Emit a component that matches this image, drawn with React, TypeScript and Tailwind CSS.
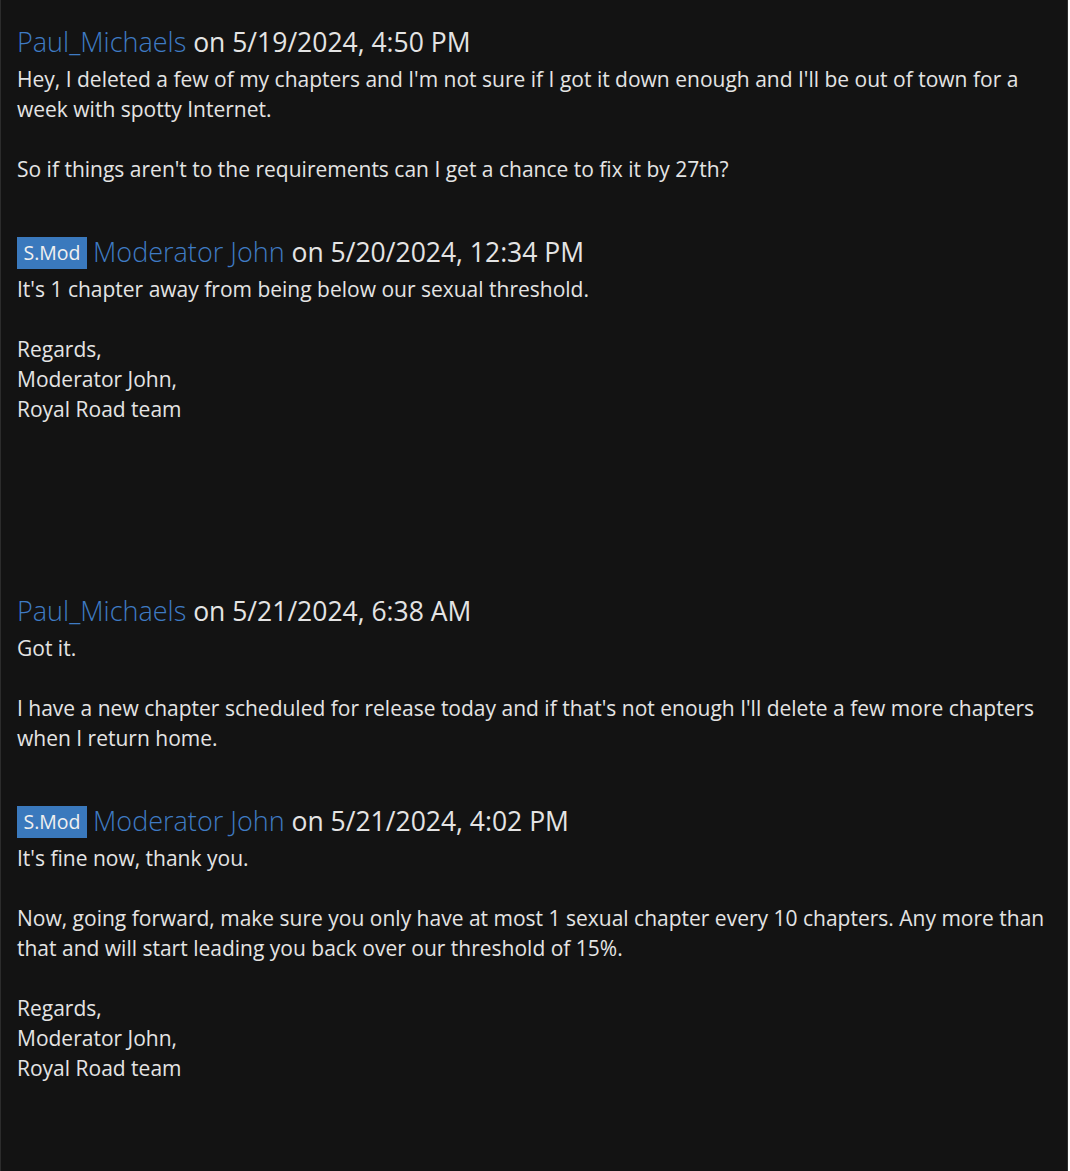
import React from "react";

type Msg = {
  name: string;
  mod?: boolean;
  date: string;
  lines: string[];
};

const msgs: Msg[] = [
  {
    name: "Paul_Michaels",
    date: "on 5/19/2024, 4:50 PM",
    lines: [
      "Hey, I deleted a few of my chapters and I'm not sure if I got it down enough and I'll be out of town for a week with spotty Internet.",
      "",
      "So if things aren't to the requirements can I get a chance to fix it by 27th?",
    ],
  },
  {
    name: "Moderator John",
    mod: true,
    date: "on 5/20/2024, 12:34 PM",
    lines: [
      "It's 1 chapter away from being below our sexual threshold.",
      "",
      "Regards,",
      "Moderator John,",
      "Royal Road team",
      "",
      "",
      "",
      "",
    ],
  },
  {
    name: "Paul_Michaels",
    date: "on 5/21/2024, 6:38 AM",
    lines: [
      "Got it.",
      "",
      "I have a new chapter scheduled for release today and if that's not enough I'll delete a few more chapters when I return home.",
    ],
  },
  {
    name: "Moderator John",
    mod: true,
    date: "on 5/21/2024, 4:02 PM",
    lines: [
      "It's fine now, thank you.",
      "",
      "Now, going forward, make sure you only have at most 1 sexual chapter every 10 chapters. Any more than that and will start leading you back over our threshold of 15%.",
      "",
      "Regards,",
      "Moderator John,",
      "Royal Road team",
    ],
  },
];

export default function App() {
  return (
    <div
      className="min-h-[1171px] w-[1068px] bg-[#131313] border-l border-r border-[#2c2c2c] px-4 pt-[20px] pb-[88px] text-[#e4e4e4]"
      style={{ fontFamily: '"Open Sans", "Liberation Sans", sans-serif' }}
    >
      <div className="flex flex-col gap-[45.6px]">
        {msgs.map((m, i) => (
          <div key={i}>
            <div className="flex items-center h-[44px] leading-[44px] whitespace-pre">
              {m.mod && (
                <span className="mr-[6px] mt-[3px] inline-flex items-center justify-center w-[70px] h-[32px] bg-[#3a79bd] text-[19.5px] leading-[32px] text-[#f0f0f0]">
                  S.Mod
                </span>
              )}
              <span className="text-[#3f7bc4] font-light text-[27px]">{m.name}</span>
              <span className="text-[26.5px]"> {m.date}</span>
            </div>
            <div className="text-[21px] leading-[30px]">
              {m.lines.map((l, j) =>
                l === "" ? (
                  <div key={j} className="h-[30px]" />
                ) : (
                  <div key={j}>{l}</div>
                )
              )}
            </div>
          </div>
        ))}
      </div>
    </div>
  );
}
